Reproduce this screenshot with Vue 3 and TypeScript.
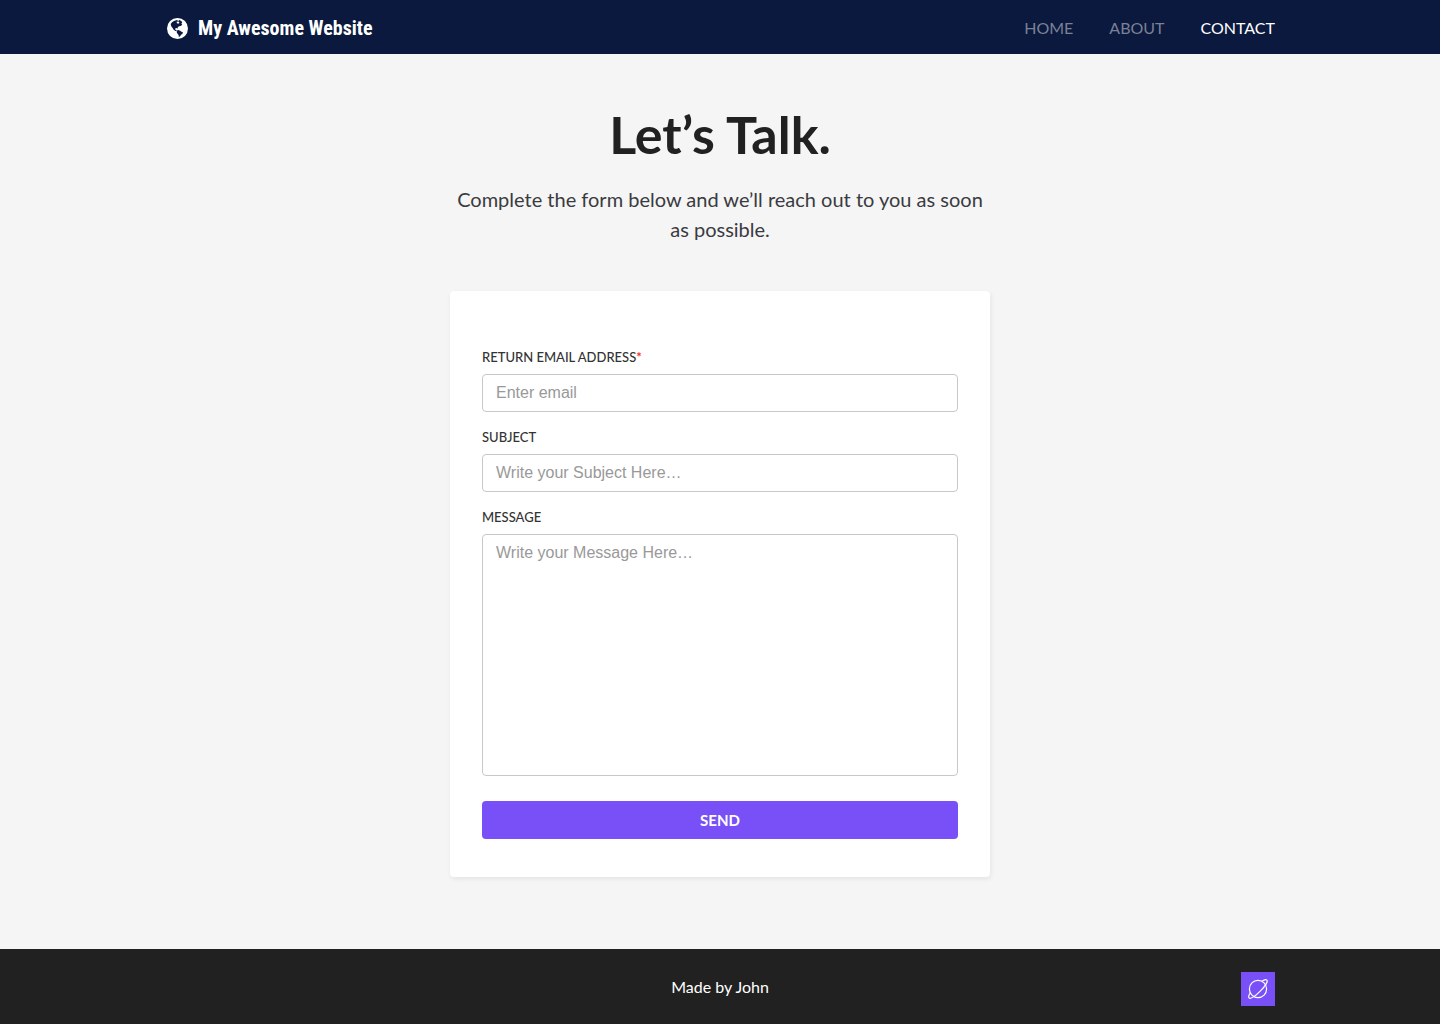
<script setup lang="ts">
import { ref } from 'vue'

interface NavItem {
  label: string
  href: string
  active: boolean
}

const navItems: NavItem[] = [
  { label: 'HOME', href: '#home', active: false },
  { label: 'ABOUT', href: '#about', active: false },
  { label: 'CONTACT', href: '#contact', active: true },
]

const email = ref('')
const subject = ref('')
const message = ref('')
</script>

<template>
  <div class="page">
    <header class="site-header">
      <div class="container header-row">
        <a class="brand" href="#home">
          <svg class="globe" viewBox="0 0 24 24" aria-hidden="true">
            <circle cx="12" cy="12" r="12" fill="#fff" />
            <path
              fill="#0a193d"
              d="M4.2 6.8 6 4.6 8.6 3 11.6 2.2 12.6 3.4 14.4 2.4 16.6 3.6 17.4 5.2 16.4 6.4 17.4 7.6 15.6 9 13.8 9.4 12.2 10.6 12.2 12.2 11 11.4 9.4 12 9 13.2 10.4 13.4 11.2 14.8 9.6 14.8 7.6 13.4 6.4 11.4 5 9.6Z"
            />
            <path fill="#fff" d="M11 4.2 13.4 4 14.2 5.8 12.6 6.6 11.2 5.6Z" />
            <path
              fill="#0a193d"
              d="M11.4 14.4 13 13.8 15 14.6 16.6 15.6 18.2 16.4 17.6 18.2 16 19.2 15 20.8 13.6 21.6 13.2 19.4 11.8 17.8 11 16Z"
            />
          </svg>
          <span>My Awesome Website</span>
        </a>
        <nav class="nav" aria-label="Main">
          <a
            v-for="item in navItems"
            :key="item.label"
            :href="item.href"
            :class="['nav-link', { active: item.active }]"
            :aria-current="item.active ? 'page' : undefined"
          >{{ item.label }}</a>
        </nav>
      </div>
    </header>

    <main class="main">
      <h1 class="title">Let’s Talk.</h1>
      <p class="lead">Complete the form below and we’ll reach out to you as soon as possible.</p>

      <form class="card" @submit.prevent>
        <div class="field">
          <label for="email">RETURN EMAIL ADDRESS<span class="required">*</span></label>
          <input id="email" v-model="email" type="email" placeholder="Enter email" required />
        </div>
        <div class="field">
          <label for="subject">SUBJECT</label>
          <input id="subject" v-model="subject" type="text" placeholder="Write your Subject Here…" />
        </div>
        <div class="field">
          <label for="message">MESSAGE</label>
          <textarea id="message" v-model="message" placeholder="Write your Message Here…"></textarea>
        </div>
        <button class="send" type="submit">SEND</button>
      </form>
    </main>

    <footer class="site-footer">
      <div class="container footer-row">
        <span class="credit">Made by John</span>
        <a class="badge" href="#planet" aria-label="Planet">
          <svg viewBox="0 0 34 34" fill="none" stroke="#fff" stroke-width="1.2" aria-hidden="true">
            <circle cx="17" cy="17" r="8.6" />
            <path d="M20.8 9.3C23 7.8 25.1 7.3 25.9 8.1C27.3 9.5 24.2 14.3 19 19.4C13.9 24.4 9.5 27.3 8.1 25.9C7.3 25.1 7.8 23.1 9.3 20.7" />
          </svg>
        </a>
      </div>
    </footer>
  </div>
</template>

<style>
body {
  margin: 0;
  background: #f5f5f5;
}
</style>

<style scoped>
* {
  box-sizing: border-box;
}

.page {
  display: flex;
  flex-direction: column;
  min-height: 100vh;
  font-family: Lato, sans-serif;
  color: #212121;
  background: #f5f5f5;
}

.container {
  width: 100%;
  max-width: 1142px;
  margin: 0 auto;
  padding: 0 16px;
}

.site-header {
  background: #0a193d;
}

.header-row {
  display: flex;
  align-items: center;
  justify-content: space-between;
  height: 54px;
}

.brand {
  display: flex;
  align-items: center;
  gap: 10px;
  padding: 2px 2px 0;
  color: #fff;
  font-family: 'Roboto Condensed', 'Liberation Sans Narrow', Roboto, sans-serif;
  font-size: 20px;
  font-weight: 700;
  line-height: 24px;
  text-decoration: none;
}

.globe {
  width: 21px;
  height: 21px;
}

.nav {
  display: flex;
  gap: 36px;
  padding-top: 2px;
}

.nav-link {
  color: #7b8197;
  font-size: 16px;
  line-height: 24px;
  text-decoration: none;
}

.nav-link.active {
  color: #fff;
}

.main {
  display: flex;
  flex: 1;
  flex-direction: column;
  align-items: center;
  padding: 48px 16px 72px;
}

.title {
  margin: 0;
  font-size: 52px;
  font-weight: 700;
  line-height: 64px;
}

.lead {
  max-width: 540px;
  margin: 18px 0 47px;
  color: #3a3b40;
  font-size: 20px;
  line-height: 30px;
  text-align: center;
}

.card {
  display: flex;
  flex-direction: column;
  gap: 15px;
  width: 100%;
  max-width: 540px;
  padding: 56px 32px 38px;
  border-radius: 4px;
  background: #fff;
  box-shadow: 1px 2px 5px rgba(0, 0, 0, 0.07);
}

.field {
  display: flex;
  flex-direction: column;
  gap: 7px;
}

.field label {
  color: #333;
  font-size: 13px;
  font-weight: 500;
  line-height: 20px;
}

.required {
  color: #f0302a;
  font-weight: 700;
}

.field input,
.field textarea {
  display: block;
  width: 100%;
  margin: 0;
  padding: 6px 13px;
  border: 1px solid #c8c8c8;
  border-radius: 4px;
  background: #fff;
  color: #333;
  font-family: 'Liberation Sans', Arial, sans-serif;
  font-size: 16px;
  line-height: 24px;
}

.field input {
  height: 38px;
}

.field textarea {
  height: 242px;
  resize: none;
}

.field input::placeholder,
.field textarea::placeholder {
  color: #999;
  opacity: 1;
}

.send {
  height: 38px;
  margin: 10px 0 0;
  padding: 0;
  border: 0;
  border-radius: 4px;
  background: #7950f8;
  color: #fff;
  font-family: Lato, sans-serif;
  font-size: 15px;
  font-weight: 700;
}

.site-footer {
  background: #212121;
}

.footer-row {
  display: grid;
  grid-template-columns: 1fr auto 1fr;
  align-items: center;
  height: 75px;
  padding-top: 4px;
}

.credit {
  grid-column: 2;
  padding-bottom: 4px;
  color: #fff;
  font-size: 16px;
  line-height: 24px;
}

.badge {
  justify-self: end;
  width: 34px;
  height: 34px;
  background: #7950f8;
}

.badge svg {
  display: block;
}
</style>
